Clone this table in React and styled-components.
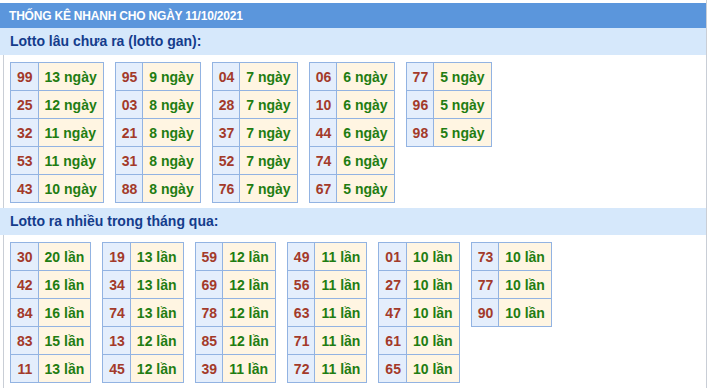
import React from 'react'
import styled, { createGlobalStyle } from 'styled-components'

const GlobalStyle = createGlobalStyle`
    body{
        margin: 0;
        background: #fff;
        font-family: "Liberation Sans", Arial, sans-serif;
    }
`

const Page = styled.div`
    width: 706px;
    padding-top: 3px;
    border-right: 1px solid #c9ced6;
    min-height: 385px;
`

const Header = styled.div`
    height: 25px;
    line-height: 26px;
    background: #5b96dc;
    color: #fff;
    font-size: 12px;
    font-weight: 700;
    letter-spacing: -0.2px;
    padding-left: 9px;
`

const SubHeader = styled.div`
    height: 27px;
    line-height: 27px;
    background: #d6e8fb;
    color: #143c8c;
    font-size: 14px;
    font-weight: 700;
    padding-left: 10px;
`

const Body = styled.div`
    margin-left: 3px;
    border-left: 1px solid #c9ced6;
    padding: 7px 0 5px 6px;
    display: flex;
    align-items: flex-start;
    gap: 11px;
`

const Table = styled.table`
    border-collapse: collapse;
    font-size: 14px;
    font-weight: 700;

    td{
        height: 27px;
        padding: 0 6px;
        border: 1px solid #92b3e2;
        white-space: nowrap;
    }
`

const Num = styled.td`
    background: #e4eefc;
    color: #a33a2a;
    text-align: center;
    && { padding: 0 5px 0 6px; }
`

const Count = styled.td`
    background: #fff5e2;
    color: #1f7d12;
`

const gan = [
    [['99', 13], ['25', 12], ['32', 11], ['53', 11], ['43', 10]],
    [['95', 9], ['03', 8], ['21', 8], ['31', 8], ['88', 8]],
    [['04', 7], ['28', 7], ['37', 7], ['52', 7], ['76', 7]],
    [['06', 6], ['10', 6], ['44', 6], ['74', 6], ['67', 5]],
    [['77', 5], ['96', 5], ['98', 5]],
]

const nhieu = [
    [['30', 20], ['42', 16], ['84', 16], ['83', 15], ['11', 13]],
    [['19', 13], ['34', 13], ['74', 13], ['13', 12], ['45', 12]],
    [['59', 12], ['69', 12], ['78', 12], ['85', 12], ['39', 11]],
    [['49', 11], ['56', 11], ['63', 11], ['71', 11], ['72', 11]],
    [['01', 10], ['27', 10], ['47', 10], ['61', 10], ['65', 10]],
    [['73', 10], ['77', 10], ['90', 10]],
]

const Block = ({ groups, unit }) => (
    <Body>
        {groups.map((rows, i) => (
            <Table key={i}>
                <tbody>
                    {rows.map(([n, c]) => (
                        <tr key={n}>
                            <Num>{n}</Num>
                            <Count>{c} {unit}</Count>
                        </tr>
                    ))}
                </tbody>
            </Table>
        ))}
    </Body>
)

const App = () => {
    return (
        <Page>
            <GlobalStyle />
            <Header>THỐNG KÊ NHANH CHO NGÀY 11/10/2021</Header>
            <SubHeader>Lotto lâu chưa ra (lotto gan):</SubHeader>
            <Block groups={gan} unit="ngày" />
            <SubHeader>Lotto ra nhiều trong tháng qua:</SubHeader>
            <Block groups={nhieu} unit="lần" />
        </Page>
    )
}

export default App
